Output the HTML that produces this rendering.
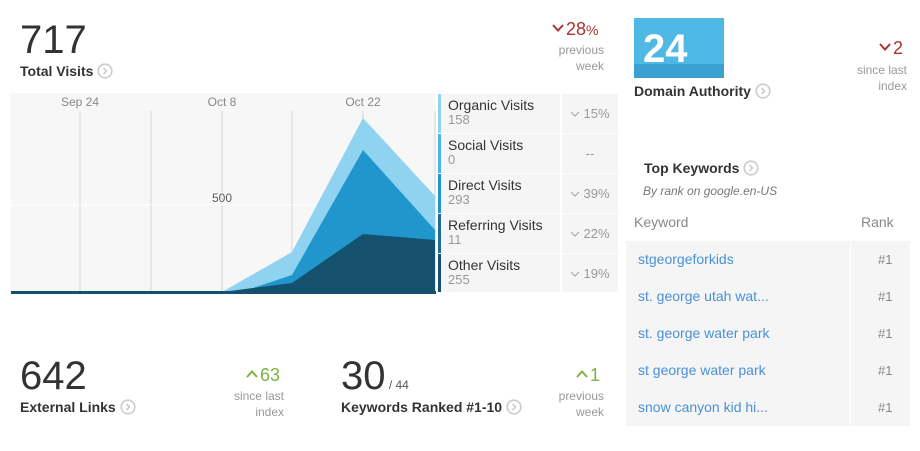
<!DOCTYPE html>
<html><head><meta charset="utf-8"><style>
*{margin:0;padding:0;box-sizing:border-box}
body{width:920px;height:451px;background:#fff;font-family:"Liberation Sans",sans-serif;position:relative;overflow:hidden;color:#333}
.a{position:absolute}
.big{font-size:40px;color:#333;line-height:1}
.lbl{font-size:14px;font-weight:bold;color:#333;white-space:nowrap;line-height:16px}
.lbl svg{vertical-align:-3px;margin-left:4px}
.gray{color:#999;font-size:12px;text-align:right;line-height:16px}
.leg{position:absolute;left:438px;width:180px;height:39px;background:#f5f5f5;border-left:3px solid}
.leg .n{position:absolute;left:7px;top:4px;font-size:14px;color:#333;line-height:15px}
.leg .v{position:absolute;left:7px;top:18px;font-size:13px;color:#999}
.leg .p{position:absolute;left:119px;top:0;width:58px;height:39px;border-left:2px solid #fff;color:#999;font-size:13px;text-align:center;line-height:39px}
.leg .p svg{vertical-align:1px;margin-right:3px}
.kw{position:absolute;left:638px;font-size:14px;color:#4a90d9}
.rk{position:absolute;left:878px;font-size:13px;color:#888}
</style></head><body>
<svg width="0" height="0" style="position:absolute"><defs>
<symbol id="ci" viewBox="0 0 16 16"><circle cx="8" cy="8" r="6.8" fill="none" stroke="#ccc" stroke-width="1.6"/><polyline points="6.5,5 9.5,8 6.5,11" fill="none" stroke="#ccc" stroke-width="1.6"/></symbol>
<symbol id="dn" viewBox="0 0 12 8"><polyline points="1,1 6,6.5 11,1" fill="none" stroke="currentColor" stroke-width="2"/></symbol>
<symbol id="up" viewBox="0 0 12 8"><polyline points="1,7 6,1.5 11,7" fill="none" stroke="currentColor" stroke-width="2"/></symbol>
<symbol id="sd" viewBox="0 0 10 6"><polyline points="1,1 5,5 9,1" fill="none" stroke="#aaa" stroke-width="1.2"/></symbol>
</defs></svg>

<div class="a big" style="left:20px;top:20px">717</div>
<div class="a lbl" style="left:20px;top:63px">Total Visits<svg width="16" height="16"><use href="#ci"/></svg></div>
<div class="a" style="left:552px;top:19px;color:#a33;font-size:18px"><svg width="12" height="8" style="vertical-align:3px;margin-right:2px"><use href="#dn"/></svg>28<span style="font-size:14px">%</span></div>
<div class="a gray" style="left:540px;top:42px;width:64px">previous<br>week</div>

<svg class="a" style="left:11px;top:93px" width="425" height="201">
<rect width="425" height="201" fill="#f7f7f7"/>
<g stroke="#d6d6d6" stroke-width="1">
<line x1="69" y1="18" x2="69" y2="200"/><line x1="140" y1="18" x2="140" y2="200"/><line x1="211" y1="18" x2="211" y2="200"/><line x1="281" y1="18" x2="281" y2="200"/><line x1="352" y1="18" x2="352" y2="200"/><line x1="424" y1="18" x2="424" y2="200"/>
</g>
<line x1="0" y1="112" x2="425" y2="112" stroke="#fff"/>
<g font-size="12" fill="#888" text-anchor="middle" font-family="Liberation Sans"><text x="69" y="13">Sep 24</text><text x="211" y="13">Oct 8</text><text x="352" y="13">Oct 22</text></g>
<text x="211" y="109" font-size="12" fill="#555" text-anchor="middle" stroke="#fff" stroke-width="2" paint-order="stroke" font-family="Liberation Sans">500</text>
<polygon points="211,199 281,159 352,25 424,103 424,199" fill="#8fd3f0"/>
<polygon points="230,199 281,182 352,57 424,137 424,199" fill="#2196cc"/>
<polygon points="211,199 281,190 352,141 424,147 424,199" fill="#13516e"/>
<rect y="198" width="425" height="3" fill="#13516e"/>
</svg>

<div class="leg" style="top:94px;border-color:#8fd3f0"><div class="n">Organic Visits</div><div class="v">158</div><div class="p"><svg width="10" height="6"><use href="#sd"/></svg>15%</div></div>
<div class="leg" style="top:134px;border-color:#4cb3e6"><div class="n">Social Visits</div><div class="v">0</div><div class="p">--</div></div>
<div class="leg" style="top:174px;border-color:#2196cc"><div class="n">Direct Visits</div><div class="v">293</div><div class="p"><svg width="10" height="6"><use href="#sd"/></svg>39%</div></div>
<div class="leg" style="top:214px;border-color:#1b6d96"><div class="n">Referring Visits</div><div class="v">11</div><div class="p"><svg width="10" height="6"><use href="#sd"/></svg>22%</div></div>
<div class="leg" style="top:254px;border-color:#13516e;height:38px"><div class="n">Other Visits</div><div class="v">255</div><div class="p"><svg width="10" height="6"><use href="#sd"/></svg>19%</div></div>

<div class="a big" style="left:20px;top:356px">642</div>
<div class="a lbl" style="left:20px;top:399px">External Links<svg width="16" height="16"><use href="#ci"/></svg></div>
<div class="a" style="left:246px;top:365px;color:#7cb342;font-size:18px"><svg width="12" height="8" style="vertical-align:3px;margin-right:2px;color:#7cb342"><use href="#up"/></svg>63</div>
<div class="a gray" style="left:214px;top:388px;width:70px">since last<br>index</div>
<div class="a big" style="left:341px;top:356px">30<span style="font-size:12px;color:#555"> / 44</span></div>
<div class="a lbl" style="left:341px;top:399px">Keywords Ranked #1-10<svg width="16" height="16"><use href="#ci"/></svg></div>
<div class="a" style="left:576px;top:365px;color:#7cb342;font-size:18px"><svg width="12" height="8" style="vertical-align:3px;margin-right:2px;color:#7cb342"><use href="#up"/></svg>1</div>
<div class="a gray" style="left:540px;top:388px;width:64px">previous<br>week</div>

<div class="a" style="left:634px;top:18px;width:90px;height:60px;background:#4fb9e6"></div>
<div class="a" style="left:634px;top:64px;width:90px;height:14px;background:#3aa0d2"></div>
<div class="a" style="left:643px;top:29px;font-size:40px;font-weight:bold;color:#fff;line-height:1">24</div>
<div class="a lbl" style="left:634px;top:83px">Domain Authority<svg width="16" height="16"><use href="#ci"/></svg></div>
<div class="a" style="left:879px;top:38px;color:#a33;font-size:18px"><svg width="12" height="8" style="vertical-align:3px;margin-right:2px"><use href="#dn"/></svg>2</div>
<div class="a gray" style="left:840px;top:62px;width:67px">since last<br>index</div>

<div class="a lbl" style="left:644px;top:160px">Top Keywords<svg width="16" height="16"><use href="#ci"/></svg></div>
<div class="a" style="left:643px;top:184px;font-size:12px;font-style:italic;color:#777">By rank on google.en-US</div>
<div class="a" style="left:634px;top:214px;font-size:14px;color:#888">Keyword</div>
<div class="a" style="left:861px;top:214px;font-size:14px;color:#888">Rank</div>
<div class="a" style="left:626px;top:241px;width:284px;height:185px;background:#f5f5f5"></div>
<div class="a" style="left:850px;top:241px;width:1px;height:185px;background:#fff"></div>
<div class="kw" style="top:251px">stgeorgeforkids</div><div class="rk" style="top:252px">#1</div>
<div class="kw" style="top:288px">st. george utah wat...</div><div class="rk" style="top:289px">#1</div>
<div class="kw" style="top:325px">st. george water park</div><div class="rk" style="top:326px">#1</div>
<div class="kw" style="top:362px">st george water park</div><div class="rk" style="top:363px">#1</div>
<div class="kw" style="top:399px">snow canyon kid hi...</div><div class="rk" style="top:400px">#1</div>
</body></html>
